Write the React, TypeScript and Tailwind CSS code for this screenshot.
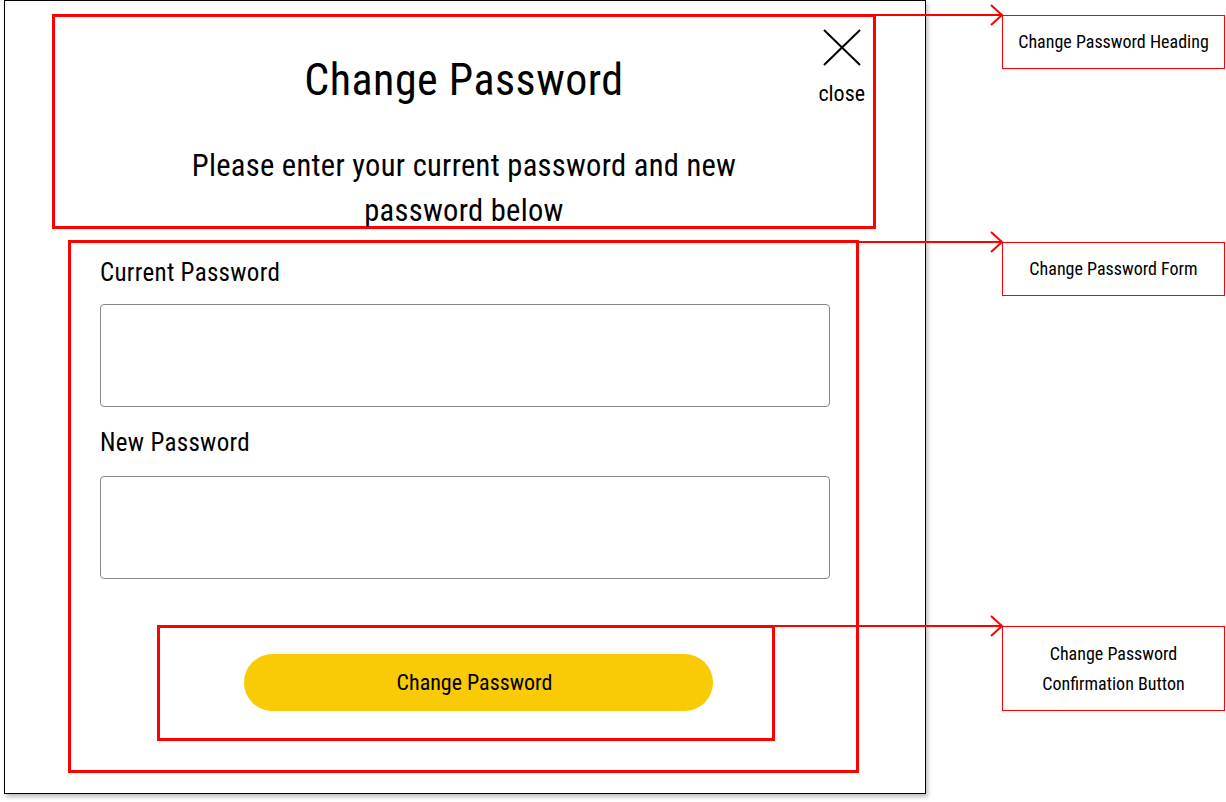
import React from 'react';

const RED = 'border-[#ff0000]';

function Field({ label, className, gap }: { label: string; className?: string; gap: string }) {
  return (
    <>
      <label className={`block text-[25px] leading-[30px] tracking-[0.3px] ${className ?? ''}`}>{label}</label>
      <input
        type="password"
        className={`${gap} h-[103px] w-full rounded-[4px] border border-[#888888] bg-white px-3 outline-none`}
      />
    </>
  );
}

export default function App() {
  return (
    <div className="relative flex h-[802px] w-[1226px] items-start bg-white text-black font-['Roboto_Condensed','Roboto','DejaVu_Sans_Condensed',sans-serif] [font-stretch:75%]">
      {/* modal */}
      <div className="ml-[4px] flex h-[794px] w-[922px] shrink-0 flex-col border border-black bg-white shadow-[2px_3px_4px_rgba(0,0,0,0.25)]">
        {/* heading */}
        <section className={`relative mt-[13px] ml-[47px] flex h-[215px] w-[824px] flex-col items-center border-[3px] ${RED}`}>
          <h1 className="mt-[35px] text-[44px] leading-[56px] tracking-[0.5px]">Change Password</h1>
          <p className="mt-[35px] max-w-[600px] text-center text-[30.5px] leading-[45px] tracking-[0.3px]">
            Please enter your current password and new password below
          </p>
          <button className="absolute top-[12px] right-[8px] flex flex-col items-center">
            <svg width="38" height="37" viewBox="0 0 38 37" fill="none" stroke="black" strokeWidth="2">
              <path d="M1 1 L37 36 M37 1 L1 36" />
            </svg>
            <span className="mt-[14px] text-[22px] leading-[28px]">close</span>
          </button>
        </section>

        {/* form */}
        <form className={`mt-[11px] ml-[63px] flex h-[533px] w-[791px] flex-col border-[3px] ${RED} pt-[15px] pl-[29px] pr-[26px]`}>
          <Field label="Current Password" gap="mt-[16px]" />
          <Field label="New Password" className="mt-[21px]" gap="mt-[18px]" />
          <div className={`mt-[46px] ml-[57px] h-[116px] w-[618px] border-[3px] ${RED} pt-[26px] pl-[84px]`}>
            <button
              type="button"
              className="h-[57px] w-[469px] rounded-full bg-[#f9ca06] pr-[8px] text-[22px] leading-[57px]"
            >
              Change Password
            </button>
          </div>
        </form>
      </div>

      {/* annotations */}
      <div className="ml-[76px] flex w-[223px] flex-col text-[18px] leading-[26px]">
        <div className="mt-[15px] flex h-[54px] items-center justify-center border border-[#ff0000]">
          Change Password Heading
        </div>
        <div className="mt-[173px] flex h-[54px] items-center justify-center border border-[#ff0000]">
          Change Password Form
        </div>
        <div className="mt-[330px] flex h-[85px] flex-col items-center justify-center border border-[#ff0000] text-center leading-[30px]">
          <span>Change Password</span>
          <span>Confirmation Button</span>
        </div>
      </div>

      <svg className="pointer-events-none absolute inset-0" width="1226" height="802" fill="none" stroke="#ff0000" strokeWidth="2">
        <path d="M876 15 H1001 M991 5 L1002 15 L991 25" />
        <path d="M859 242 H1001 M991 232 L1002 242 L991 252" />
        <path d="M775 626 H1001 M991 616 L1002 626 L991 636" />
      </svg>
    </div>
  );
}
